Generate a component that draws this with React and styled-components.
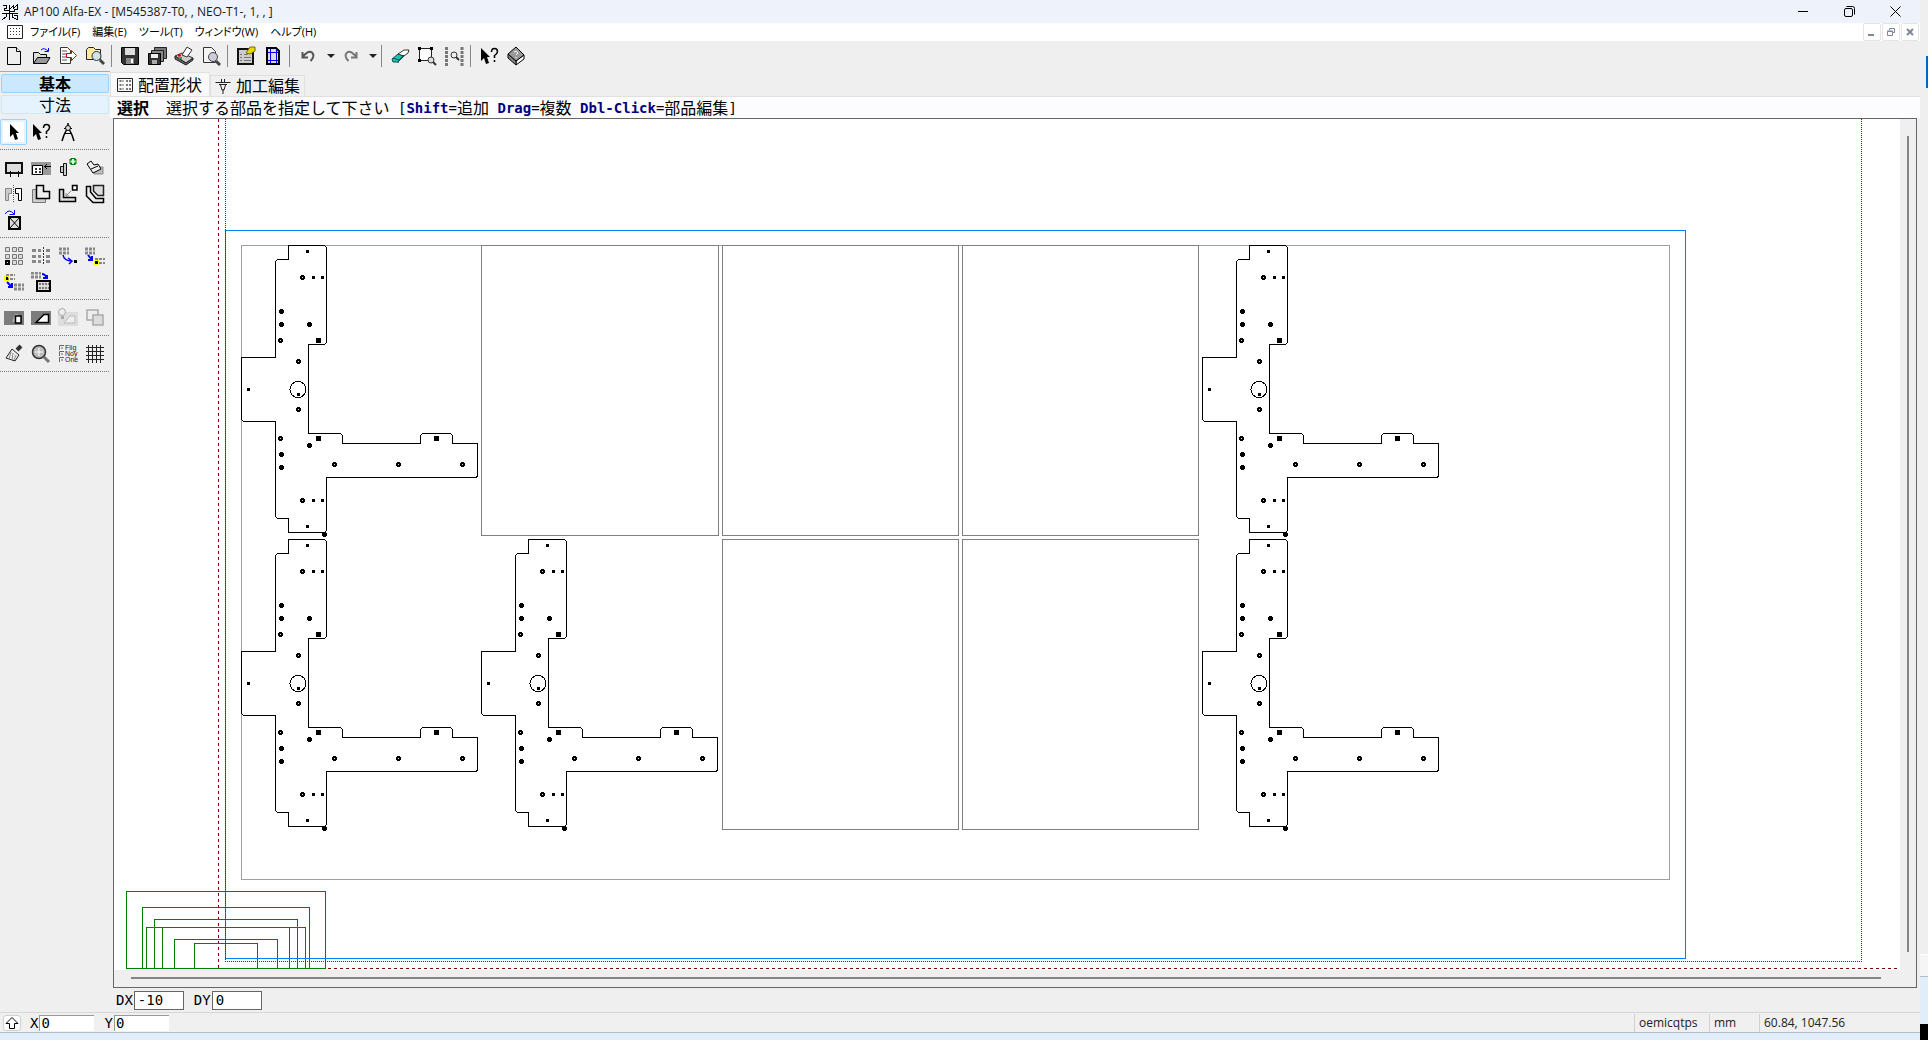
import React from 'react';
import styled, { createGlobalStyle, css } from 'styled-components';

const GlobalStyle = createGlobalStyle`
  * { box-sizing: border-box; }
  body {
    margin: 0;
    background: #e1edf8;
    color: #000;
    font-family: "Open Sans", "Noto Sans CJK JP", sans-serif;
    font-size: 12px;
  }
  button, input {
    font: inherit;
    color: inherit;
    margin: 0;
    padding: 0;
    border: 0;
    background: none;
    border-radius: 0;
  }
`

const Desktop = styled.div`
  display: flex;
  min-height: 100vh;
`
const Window = styled.div`
  flex: 1;
  min-width: 0;
  display: flex;
  flex-direction: column;
`
const Edge = styled.div`
  width: 8px;
  display: flex;
  flex-direction: column;
  align-items: flex-end;
  background: #efefef;
`
const EdgeMark = styled.div`
  width: 2px;
  height: 32px;
  margin-top: 56px;
  background: #0067c0;
`
const EdgePanel = styled.div`
  width: 8px;
  height: 23px;
  margin-top: auto;
  background: #f5f5f5;
  border-top: 1px solid #fff;
  border-bottom: 1px solid #b4bcc4;
`
const EdgeSky = styled.div`
  width: 8px;
  height: 47px;
  background: #e1edf8;
`
const EdgeDark = styled.div`
  width: 8px;
  height: 16px;
  background: #000;
`

const TitleBar = styled.header`
  display: flex;
  align-items: center;
  height: 23px;
  padding-left: 2px;
  background: #eef3fb;
`
const Title = styled.h1`
  flex: 1;
  margin: 0 0 0 5px;
  font-size: 12px;
  font-weight: 400;
  line-height: 16px;
  color: #1a1a1a;
  white-space: pre;
`
const WindowButton = styled.button`
  display: grid;
  place-items: center;
  width: 46px;
  height: 20px;
`
const WindowButtons = styled.div`
  display: flex;
  align-items: center;
  padding-right: 2px;
`

const MenuBar = styled.nav`
  display: flex;
  align-items: center;
  height: 18px;
  padding-left: 7px;
  background: #fff;
`
const MenuList = styled.div`
  flex: 1;
  display: flex;
  gap: 12px;
  margin-left: 7px;
`
const MenuItem = styled.button`
  font-size: 11px;
  line-height: 16px;
  white-space: nowrap;
  font-feature-settings: "palt";
`
const ChildButtons = styled.div`
  display: flex;
  gap: 1px;
  padding-right: 1px;
`
const ChildButton = styled.button`
  display: grid;
  place-items: center;
  width: 18px;
  height: 18px;
  border: 1px solid #e4e4e4;
  border-radius: 2px;
  background: #fff;
`

const ToolBar = styled.div`
  display: flex;
  align-items: center;
  height: 30px;
  background: #efefef;
`
const ToolButton = styled.button`
  display: grid;
  place-items: center;
  width: ${props => props.$narrow ? '15px' : '27px'};
  height: 26px;
`
const ToolLine = styled.div`
  width: 1px;
  height: 22px;
  margin: 0 4px 0 3px;
  background: #888;
`

const Body = styled.div`
  flex: 1;
  display: flex;
  background: #efefef;
`
const Side = styled.aside`
  width: 110px;
  padding: 2px 1px 0 0;
  border-top: 1px solid #a9a9a9;
  background: #efefef;
`
const SideTab = styled.button`
  display: block;
  width: 108px;
  height: 19px;
  margin: 0 0 2px 1px;
  border: 1px solid ${props => props.$active ? '#99d1ff' : '#cce8ff'};
  border-radius: 2px;
  background: ${props => props.$active ? '#cce8ff' : '#e5f3ff'};
  font-size: 16px;
  line-height: 16px;
  font-weight: ${props => props.$active ? 700 : 400};
`
const IconGroup = styled.div`
  display: grid;
  grid-template-columns: repeat(4, 27px);
  grid-auto-rows: 26px;
  padding: ${props => props.$first ? '3px' : '5px'} 0 4px;
  border-bottom: 1px dotted #777;
`
const SideButton = styled.button`
  display: grid;
  place-items: center;
  width: 27px;
  height: 26px;
  ${props => props.$active && css`
    border: 1px solid #99d1ff;
    border-radius: 2px;
    background: #fff;
    box-shadow: inset 0 0 0 2px #e5f3ff;
  `}
`

const Main = styled.main`
  flex: 1;
  min-width: 0;
  display: flex;
  flex-direction: column;
`
const Tabs = styled.div`
  display: flex;
  align-items: flex-end;
  height: 26px;
  border-bottom: 1px solid #e0e0e0;
`
const Tab = styled.button`
  display: flex;
  align-items: center;
  gap: 5px;
  height: ${props => props.$active ? '24px' : '21px'};
  padding: 0 ${props => props.$active ? '7px' : '4px'} 0 ${props => props.$active ? '6px' : '4px'};
  border: 1px solid #e0e0e0;
  border-bottom: 0;
  background: ${props => props.$active ? '#f9f9f9' : '#f0f0f0'};
  font-size: 16px;
  line-height: 18px;
  white-space: nowrap;
`
const Prompt = styled.div`
  display: flex;
  align-items: center;
  height: 21px;
  padding-left: 7px;
  background: #fcfcfe;
  font-size: 16px;
  line-height: 20px;
  white-space: pre;
`
const PromptMode = styled.b`
  margin-right: 17px;
`
const Mono = styled.span`
  font-family: "DejaVu Sans Mono", monospace;
  font-size: 14px;
`
const Key = styled(Mono)`
  font-weight: 700;
  color: #000080;
`
const View = styled.section`
  flex: 1;
  display: grid;
  grid-template-columns: 1fr 16px;
  grid-template-rows: 1fr 17px;
  margin: 0 3px 0 3px;
  border: 1px solid #666;
  background: #efefef;
`
const Sheet = styled.div`
  background: #fff;
  svg { display: block; width: 100%; height: auto; }
`
const VTrack = styled.div`
  padding: 17px 7px 18px;
`
const HTrack = styled.div`
  padding: 7px 19px 8px 17px;
`
const Thumb = styled.div`
  width: 100%;
  height: 100%;
  background: #858585;
`
const DeltaRow = styled.div`
  display: flex;
  align-items: center;
  height: 24px;
  padding-left: 6px;
`
const Label = styled.label`
  display: flex;
  align-items: center;
  gap: 1px;
  margin-right: 10px;
  font-family: "DejaVu Sans Mono", monospace;
  font-size: 14px;
`
const DeltaInput = styled.input`
  width: 50px;
  height: 19px;
  padding-left: 3px;
  border: 1px solid #666;
  background: #fff;
`

const Status = styled.footer`
  display: flex;
  align-items: center;
  height: 21px;
  padding-left: 3px;
  border-top: 1px solid #d7d7d7;
  border-bottom: 1px solid #b4bcc4;
  background: #f0f0f0;
`
const UpButton = styled.button`
  display: grid;
  place-items: center;
  width: 18px;
  height: 16px;
  margin-right: 9px;
  border: 1px solid #d0d0d0;
  border-radius: 3px;
  background: #fdfdfd;
`
const PointInput = styled.input`
  width: 55px;
  height: 16px;
  padding-left: 1px;
  border-top: 1px solid #999;
  border-left: 1px solid #999;
  background: #fff;
`
const StatusCells = styled.div`
  display: flex;
  margin-left: auto;
`
const StatusCell = styled.span`
  width: ${props => props.$width};
  height: 18px;
  padding-left: 4px;
  border-left: 1px solid #d0d0d0;
  line-height: 18px;
  color: #222;
`
const Taskbar = styled.div`
  height: 7px;
  background: #e1edf8;
`

// 20x20 pixel glyphs used by the tool bar and the side palette
const art = {
  new: <><path d="M3.500 1.500H12.500L16.500 5.500V18.500H3.500Z" fill="#eee" stroke="#000" /><path d="M12.500 1.500V5.500H16.500" fill="#fff" stroke="#000" /></>,
  open: <><path d="M2.500 17.500V6.500H7.500L9.500 8.500H15.500V11.500" fill="#ddd" stroke="#000" /><path d="M2.500 17.500L6.500 11.500H19L15.500 17.500Z" fill="#999" stroke="#000" /><path d="M10 4Q13 1 17 5M17.500 2V5.500H13.500" stroke="#00f" fill="none" /></>,
  export: <><path d="M2.500 1.500H9.500L12.500 4.500V17.500H2.500Z" fill="#fff" stroke="#333" /><path d="M4 5H9M4 8H9M4 11H9M4 14H9" stroke="#555" /><path d="M8.500 7.500H13.500V4.500L18.500 9.500L13.500 14.500V11.500H8.500Z" fill="#fff" stroke="#d00000" /></>,
  browse: <><path d="M1.500 13.500V3.500L3.500 1.500H8.500L10.500 3.500H15.500V13.500Z" fill="#ffe9a0" stroke="#222" /><circle cx="11.500" cy="10" r="4.500" fill="#cfe4e8" stroke="#333" /><path d="M15 14L19 18" stroke="#444" strokeWidth="3" /></>,
  save: <><path d="M1.500 1.500H18.500V18.500H3.500L1.500 16.500Z" fill="#333" stroke="#000" /><path d="M5 2H15V9H5Z" fill="#ddd" /><path d="M6 12H14V18H6Z" fill="#888" /><path d="M11 13H13V17H11Z" fill="#fff" /></>,
  saveAll: <><path d="M7.500 1.500H19.500V12.500H7.500Z" fill="#777" stroke="#222" /><path d="M4.500 4.500H16.500V15.500H4.500Z" fill="#888" stroke="#222" /><path d="M1.500 7.500H13.500V18.500H1.500Z" fill="#333" stroke="#000" /><path d="M4 8H11V12H4Z" fill="#eee" /><path d="M5 14H10V18H5Z" fill="#aaa" /></>,
  print: <><path d="M1 10L8 7L19 12L12 17Z" fill="#ccc" stroke="#333" /><path d="M8 9L13 1L18 4L13 11Z" fill="#fff" stroke="#333" /><path d="M1 10V13L12 19L19 14V12L12 17Z" fill="#666" stroke="#222" /><path d="M4 9.500H7" stroke="#e00000" strokeWidth="2" /><path d="M5 12H8" stroke="#00c040" strokeWidth="2" /></>,
  preview: <><path d="M2.500 1.500H10.500L14.500 5.500V16.500H2.500Z" fill="#f4f4f4" stroke="#333" /><circle cx="12" cy="11" r="4.500" fill="#ccd" stroke="#444" /><path d="M15 15L19 19" stroke="#444" strokeWidth="3" /></>,
  property: <><path d="M2 3H17V18H2Z" fill="#ccc" stroke="#111" strokeWidth="2" /><path d="M4 8.500H6M8 8.500H12M4 11.500H6M8 11.500H15M4 14.500H6M8 14.500H15" stroke="#777" /><path d="M10 7L14 1H19V5L14 8Z" fill="#e8d800" stroke="#776c00" /></>,
  doc: <><path d="M4 2H13L16 5V18H4Z" fill="#ddd" stroke="#000" strokeWidth="2" /><path d="M7.500 3V17M13.500 3V17M5 6.500H15M5 14.500H15" stroke="#00f" /></>,
  undo: <path d="M4.500 6V11.500H10M4 12Q10 3.500 14 6.500Q17.500 10 12.500 15" fill="none" stroke="#555" strokeWidth="2" />,
  redo: <path d="M16.500 6V11.500H11M17 12Q11 3.500 7 6.500Q3.500 10 8.500 15" fill="none" stroke="#777" strokeWidth="2" />,
  caret: <path d="M6 8H14L10 12Z" fill="#222" />,
  eraser: <><path d="M2 13L8 8L14 10L8 16L3 16Z" fill="#20c0b0" stroke="#055" /><path d="M8 8L14 4H19L18 7L14 10Z" fill="#fff" stroke="#333" /><path d="M3 12L9 14L14 9M9 14L8 17" fill="none" stroke="#055" /></>,
  zoomBox: <><path d="M2.500 2.500H14.500V14.500H2.500Z" fill="#fff" stroke="#222" /><path d="M1 1H4V4H1ZM13 1H16V4H13ZM1 13H4V16H1Z" fill="#000" /><circle cx="14" cy="14" r="3" fill="#ddd" stroke="#333" /><path d="M16 16L19 19" stroke="#333" strokeWidth="2" /></>,
  zoomParts: <><path d="M2.500 1V20M18 1V20" stroke="#777" strokeWidth="3" strokeDasharray="3 1" /><circle cx="10" cy="9" r="3" fill="none" stroke="#333" /><path d="M12 11L15 14" stroke="#333" strokeWidth="2" /></>,
  help: <><path d="M2 2V15L5 12L7 18L10 17L8 11H11Z" fill="#000" /><path d="M12.500 6Q12.500 2.500 15.500 2.500Q18.500 2.500 18.500 5.500Q18.500 7.500 15.500 9.500V12M15.500 14V16" fill="none" stroke="#000" strokeWidth="1.500" /></>,
  book: <><path d="M10 15L18 9V13L10 19Z" fill="#fff" stroke="#000" /><path d="M2 8L10 15V19L2 12Z" fill="#888" stroke="#000" /><path d="M2 8L10 1L18 9L10 15Z" fill="#999" stroke="#000" /><path d="M8 6Q11 4 12 7L10 9M10 11V12" fill="none" stroke="#fff" /></>,
  arrow: <path d="M6 2V15L9 12L11 18L14 17L12 11H15Z" fill="#000" />,
  compass: <><path d="M10 1V4M8.500 8L6 13L4 19M11.500 8L14 13L16 19" stroke="#000" strokeWidth="1.500" fill="none" /><circle cx="10" cy="6" r="2.500" fill="#ddd" stroke="#000" /><path d="M6 6.500H7.500M12.500 6.500H14M7 11.500H13" stroke="#000" /></>,
  sheet: <><path d="M2 5H18V15H2Z" fill="#ddd" stroke="#111" strokeWidth="2" /><path d="M6.500 13V19M14.500 13V19" stroke="#000" /></>,
  place: <><path d="M0 4H20V17H0Z" fill="#999" /><path d="M1.500 7.500H11.500V16.500H1.500Z" fill="#fff" stroke="#000" /><path d="M4 10H6V12H4ZM8 10H10V12H8ZM4 13H6V15H4ZM8 13H10V15H8Z" fill="#333" /><path d="M13 8.500H20M16 6L13.500 8.500L16 11" stroke="#000" fill="none" /></>,
  addPart: <><path d="M8.500 5.500H5.500V8.500H2.500V14.500H5.500V17.500H8.500Z" fill="#ccc" stroke="#111" /><path d="M5.500 8V15" stroke="#111" /><path d="M15 0V7M11.500 3.500H18.500" stroke="#080" strokeWidth="5" /><path d="M15 1V6M12.500 3.500H17.500" stroke="#dfd" strokeWidth="2" /></>,
  rotate: <><path d="M9 9H18V16H9Z" fill="#bbb" stroke="#888" /><path d="M2 6L6 3L9 7L13 6L16 11L8 15Z" fill="#eee" stroke="#000" /><path d="M6 11L13 8" stroke="#000" /></>,
  mirror: <><path d="M1.500 16.500V4.500H7.500V9.500H4.500V16.500Z" fill="#ccc" stroke="#888" /><path d="M9.500 1V19" stroke="#555" strokeDasharray="1 1" /><path d="M17.500 16.500V4.500H11.500V9.500H14.500V16.500Z" fill="#fff" stroke="#000" /></>,
  copy: <><path d="M1.500 5.500H11.500V11.500H14.500V18.500H1.500Z" fill="#ccc" stroke="#777" /><path d="M5.500 1.500H12.500V7.500H18.500V14.500H5.500Z" fill="#eee" stroke="#000" strokeWidth="1.500" /></>,
  move: <><path d="M1.500 5.500H5.500V13.500H17.500V17.500H1.500Z" fill="#ddd" stroke="#000" strokeWidth="1.500" /><path d="M14.500 1.500H19V6H14.500Z" fill="#fff" stroke="#000" strokeWidth="1.500" /><path d="M13 7L8 12M8 9V12H11" stroke="#888" fill="none" /></>,
  fit: <><path d="M1.500 2.500H5.500V8L11 14.500H18.500V18.500H8L1.500 12Z" fill="#eee" stroke="#000" strokeWidth="1.500" /><path d="M8.500 1.500H18.500V11.500H13L8.500 7Z" fill="#ddd" stroke="#222" strokeWidth="1.500" /></>,
  remove: <><path d="M1 4Q5 -2 10 4M5.500 4.500H10.500V0" stroke="#00f" fill="none" /><path d="M5 7H16V19H5Z" fill="#ddd" stroke="#000" strokeWidth="2" /><path d="M6 8L15 18M15 8L6 18" stroke="#000" /></>,
  grid9: <><path d="M1.500 1.500H5.500V5.500H1.500ZM8.500 1.500H12.500V5.500H8.500ZM14.500 1.500H18.500V5.500H14.500ZM1.500 8.500H5.500V12.500H1.500ZM8.500 8.500H12.500V12.500H8.500ZM14.500 8.500H18.500V12.500H14.500ZM8.500 14.500H12.500V18.500H8.500ZM14.500 14.500H18.500V18.500H14.500Z" fill="#ddd" stroke="#777" /><path d="M2 15H5V18H2Z" fill="#fff" stroke="#000" strokeWidth="2" /></>,
  grid6: <><path d="M1 3H5V6H1ZM7 3H10V6H7ZM1 9H5V12H1ZM7 9H10V12H7ZM1 14H5V17H1ZM7 14H10V17H7ZM15 3H19V6H15ZM15 9H19V12H15ZM15 14H19V17H15Z" fill="#888" /><path d="M12.500 1V19" stroke="#333" strokeDasharray="2 1" /></>,
  arrayTo: <><path d="M1 3H11M1 7H11" stroke="#888" strokeWidth="3" strokeDasharray="3 1" /><path d="M5 9Q6 15 14 15M10 12L14 15L11 18" stroke="#00f" strokeWidth="1.500" fill="none" /><path d="M16 14H19V17H16Z" fill="#000" /></>,
  arrayPick: <><path d="M0 3H10M0 7H10" stroke="#888" strokeWidth="3" strokeDasharray="3 1" /><path d="M3 9L7 14M7 10V14H3" stroke="#00f" strokeWidth="2" fill="none" /><path d="M9 14H14V19H9Z" fill="#ff0" /><path d="M10 13H20M10 17H20" stroke="#888" strokeWidth="2" strokeDasharray="3 1" /><path d="M10 15H13V18H10Z" fill="#000" /></>,
  arraySrc: <><path d="M0 4H5V9H0Z" fill="#ff0" /><path d="M2 3H11M2 7H11" stroke="#888" strokeWidth="2" strokeDasharray="3 1" /><path d="M2 5H4V8H2Z" fill="#000" /><path d="M3 10L8 15M8 11V15H4" stroke="#00f" strokeWidth="2" fill="none" /><path d="M10 13H20M10 17H20" stroke="#888" strokeWidth="3" strokeDasharray="3 1" /></>,
  arraySheet: <><path d="M0 1H10M0 5H10" stroke="#888" strokeWidth="3" strokeDasharray="3 1" /><path d="M11 2Q14 2 16 6M12 6H16V3" stroke="#00f" strokeWidth="2" fill="none" /><path d="M6 9H19V19H6Z" fill="#ddd" stroke="#000" strokeWidth="2" /><path d="M8 12H18M8 16H18" stroke="#777" strokeWidth="2" strokeDasharray="2 1" /></>,
  shapeBox: <><path d="M0 3H20V17H0Z" fill="#7c7c7c" /><path d="M8 14L11 6H14V14Z" fill="#aaa" /><path d="M11.500 8H17V15H11.500Z" fill="#fff" stroke="#000" strokeWidth="1.500" /></>,
  shapeCut: <><path d="M0 3H20V17H0Z" fill="#7c7c7c" /><path d="M5 14.500L13 6.500H17.500V14.500Z" fill="#fff" stroke="#000" strokeWidth="1.500" /></>,
  lamp: <><path d="M0 4H20V18H0Z" fill="#ddd" /><path d="M6 15L12 8H17V15Z" fill="#eee" stroke="#bbb" /><circle cx="4" cy="4" r="3.500" fill="#eee" stroke="#aaa" /><path d="M3 8H6V11H3Z" fill="#aaa" /></>,
  layers: <><path d="M2 2H13V12H2Z" fill="#eee" stroke="#aaa" strokeWidth="1.500" /><path d="M8 7H18V17H8Z" fill="#ddd" stroke="#aaa" strokeWidth="1.500" /></>,
  broom: <><path d="M13 6L17 2" stroke="#333" strokeWidth="4" /><path d="M8 5L15 11L11 17L2 14Z" fill="#eee" stroke="#222" /><path d="M7 8L5 15M9 9L8 16M12 11L10 16" stroke="#888" /></>,
  lens: <><circle cx="8" cy="8" r="6.500" fill="#bbb" stroke="#333" strokeWidth="1.500" /><path d="M8 4V12M4 8H12" stroke="#fff" /><path d="M13 13L18 18" stroke="#777" strokeWidth="3" /></>,
  grid: <path d="M3.500 1V19M7.500 1V19M11.500 1V19M15.500 1V19M1 3.500H19M1 7.500H19M1 11.500H19M1 15.500H19" stroke="#222" />,
}

const Glyph = ({ name }) => (
  <svg width="20" height="20" viewBox="0 0 20 20" fill="none" aria-hidden="true">{art[name]}</svg>
);

// three tick boxes with short captions
const ListGlyph = () => (
  <svg width="20" height="20" viewBox="0 0 20 20" aria-hidden="true">
    <path d="M1.500 6V1.500H6M1.500 12V7.500H6M1.500 18V13.500H6M3 4H5M3 10H5M3 16H5" fill="none" stroke="#666" />
    <g fontFamily="Liberation Sans" fontSize="7" fill="#222">
      <text x="7" y="6">Flig</text>
      <text x="7" y="12">Noy</text>
      <text x="7" y="18">One</text>
    </g>
  </svg>
);

const AppLogo = () => (
  <svg width="17" height="16" viewBox="0 0 17 16" fill="none" stroke="#000" shapeRendering="crispEdges" aria-hidden="true">
    <path d="M.500 1.500H4.500V4.500H2.500V6.500H7.500V1M7.500 5.500L11.500 1.500V4.500L15.500 .500V5.500H12.500V7.500H7.500V15.500M0 9.500H16M4.500 9.500V12.500L.500 15.500M10.500 10V13.500L15.500 15.500V11.500H12" />
  </svg>
);

const SheetIcon = () => (
  <svg width="16" height="14" viewBox="0 0 16 14" fill="none" aria-hidden="true">
    <path d="M.500 .500H15.500V13.500H.500Z" stroke="#222" />
    <path d="M3 3.500H14M3 6.500H14M3 9.500H14" stroke="#333" strokeDasharray="1 2" />
  </svg>
);

const LayoutIcon = () => (
  <svg width="16" height="14" viewBox="0 0 16 14" fill="none" aria-hidden="true">
    <path d="M.500 .500H15.500V13.500H.500Z" stroke="#222" />
    <path d="M2.500 3H6.500M2.500 7H6.500M2.500 11H6.500M9 3H14M9 7H14M9 11H14" stroke="#777" strokeWidth="2" strokeDasharray="2 1" />
  </svg>
);

const PunchIcon = () => (
  <svg width="16" height="16" viewBox="0 0 16 16" fill="none" stroke="#222" aria-hidden="true">
    <path d="M6.500 1V4M9.500 1V4M.500 4.500H15.500M4 6.500H12M5.500 7L7 12H9L10.500 7M8 11V16" />
  </svg>
);

const outline = 'M47.500 .500H83.500l2 2V97.500l-2 2H67.500V188.500H99.500l2 2V198.500H179.500V190.500l2-2H209.500l2 2V198.500H236.500V230.500l-1 2H85.500V285.500l-2 2H47.500V273.500H36.500l-2-2V176.500H2.500l-2-2V112.500H34.500V16.500l2-2H47.500Z'
const rings = [[61, 32], [39, 95], [57, 116], [57, 164], [39, 193], [93, 219], [157, 219], [221, 219], [61, 255]]
const dots = [[40, 66], [40, 79], [68, 79], [68, 200], [40, 209], [40, 222], [83, 289]]
const specks = [[66, 6], [72, 32], [81, 32], [7, 144], [57, 149], [72, 255], [81, 255], [66, 281]]
const squares = [[77, 95], [77, 193], [195, 193]]

const Part = ({ x, y }) => (
  <g transform={`translate(${x} ${y})`} fill="#000" stroke="none">
    <path d={outline} fill="none" stroke="#000" />
    <circle cx="57" cy="144.500" r="8" fill="none" stroke="#000" />
    {rings.map(([cx, cy]) => (
      <g key={`${cx}-${cy}`}>
        <circle cx={cx + .5} cy={cy + .5} r="2.500" />
        <rect x={cx} y={cy} width="1" height="1" fill="#ddd" />
      </g>
    ))}
    {dots.map(([cx, cy]) => <circle key={`${cx}-${cy}`} cx={cx + .5} cy={cy + .5} r="2.500" />)}
    {specks.map(([cx, cy]) => <rect key={`${cx}-${cy}`} x={cx - 1} y={cy - 1} width="3" height="3" />)}
    {squares.map(([cx, cy]) => <rect key={`${cx}-${cy}`} x={cx - 2} y={cy - 2} width="5" height="5" />)}
  </g>
);

const parts = [[241, 245], [1202, 245], [241, 539], [481, 539], [1202, 539]]
const blanks = [[481, 245, 237], [722, 245, 236], [962, 245, 236], [722, 539, 236], [962, 539, 236]]
const clamps = [[126, 891, 199], [142, 907, 167], [154, 919, 143], [146, 927, 159], [162, 927, 127], [174, 939, 103], [194, 943, 63]]

const Drawing = () => (
  <svg viewBox="114 119 1786 851" shapeRendering="crispEdges" fill="none" role="img" aria-label="sheet layout">
    <path d="M218.500 119V968M226 968.500H1900" stroke="#800000" strokeDasharray="3 3" />
    <rect x="241.500" y="245.500" width="1428" height="634" stroke="#a0a0a0" />
    {blanks.map(([x, y, w]) => (
      <rect key={`${x}-${y}`} x={x + .5} y={y + .5} width={w} height="290" stroke="#808080" />
    ))}
    {parts.map(([x, y]) => <Part key={`${x}-${y}`} x={x} y={y} />)}
    {clamps.map(([x, y, w]) => (
      <rect key={`${x}-${y}`} x={x + .5} y={y + .5} width={w} height={968 - y} stroke="#008000" />
    ))}
    <rect x="225.500" y="230.500" width="1460" height="728" stroke="#0080ff" />
    <path d="M225.500 119V961.500H1861.500V119" stroke="#800080" strokeDasharray="1 1" />
  </svg>
);

const menus = ['ファイル(F)', '編集(E)', 'ツール(T)', 'ウィンドウ(W)', 'ヘルプ(H)']
const tools = [
  'new', 'open', 'export', 'browse', '|', 'save', 'saveAll', 'print', 'preview', '|', 'property', 'doc', '|',
  'undo', 'caret', 'redo', 'caret', '|', 'eraser', 'zoomBox', 'zoomParts', '|', 'help', 'book',
]
const palette = [
  ['arrow', 'help', 'compass'],
  ['sheet', 'place', 'addPart', 'rotate', 'mirror', 'copy', 'move', 'fit', 'remove'],
  ['grid9', 'grid6', 'arrayTo', 'arrayPick', 'arraySrc', 'arraySheet'],
  ['shapeBox', 'shapeCut', 'lamp', 'layers'],
  ['broom', 'lens', 'list', 'grid'],
]

const TopBars = () => (
  <>
    <TitleBar>
      <AppLogo />
      <Title>AP100 Alfa-EX - [M545387-T0, , NEO-T1-, 1, , ]</Title>
      <WindowButtons>
        <WindowButton aria-label="minimize">
          <svg width="11" height="11"><path d="M0 5.500H10" stroke="#000" /></svg>
        </WindowButton>
        <WindowButton aria-label="restore">
          <svg width="11" height="11" fill="none" stroke="#000"><rect x=".5" y="2.500" width="8" height="8" rx="1.500" /><path d="M2.500 .500H8.500Q10.500 .500 10.500 2.500V8.500" /></svg>
        </WindowButton>
        <WindowButton aria-label="close">
          <svg width="11" height="11"><path d="M.500 .500L10.500 10.500M10.500 .500L.500 10.500" stroke="#000" /></svg>
        </WindowButton>
      </WindowButtons>
    </TitleBar>
    <MenuBar>
      <SheetIcon />
      <MenuList>
        {menus.map(menu => <MenuItem key={menu}>{menu}</MenuItem>)}
      </MenuList>
      <ChildButtons>
        <ChildButton aria-label="minimize sheet">
          <svg width="10" height="10"><path d="M1 8H7" stroke="#7a8899" strokeWidth="2" /></svg>
        </ChildButton>
        <ChildButton aria-label="restore sheet">
          <svg width="10" height="10" fill="none" stroke="#7a8899"><path d="M1.500 4.500H6.500V8.500H1.500ZM1 4H7M3.500 3V1.500H8.500V5.500H7" /></svg>
        </ChildButton>
        <ChildButton aria-label="close sheet">
          <svg width="10" height="10"><path d="M2 2L8 8M8 2L2 8" stroke="#7a8899" strokeWidth="2" /></svg>
        </ChildButton>
      </ChildButtons>
    </MenuBar>
    <ToolBar>
      {tools.map((name, i) => name === '|'
        ? <ToolLine key={i} />
        : <ToolButton key={i} $narrow={name === 'caret'} aria-label={name}><Glyph name={name} /></ToolButton>)}
    </ToolBar>
  </>
);

const SidePalette = () => (
  <Side>
    <SideTab $active>基本</SideTab>
    <SideTab>寸法</SideTab>
    {palette.map((group, i) => (
      <IconGroup key={i} $first={i === 0}>
        {group.map(name => (
          <SideButton key={name} $active={name === 'arrow'} aria-label={name}>
            {name === 'list' ? <ListGlyph /> : <Glyph name={name} />}
          </SideButton>
        ))}
      </IconGroup>
    ))}
  </Side>
);

export default function App() {
  return (
    <Desktop>
      <GlobalStyle />
      <Window>
        <TopBars />
        <Body>
          <SidePalette />
          <Main>
            <Tabs>
              <Tab $active><LayoutIcon />配置形状</Tab>
              <Tab><PunchIcon />加工編集</Tab>
            </Tabs>
            <Prompt>
              <PromptMode>選択</PromptMode>
              選択する部品を指定して下さい
              <Mono> [</Mono><Key>Shift</Key><Mono>=</Mono>追加
              <Mono> </Mono><Key>Drag</Key><Mono>=</Mono>複数
              <Mono> </Mono><Key>Dbl-Click</Key><Mono>=</Mono>部品編集<Mono>]</Mono>
            </Prompt>
            <View>
              <Sheet><Drawing /></Sheet>
              <VTrack><Thumb /></VTrack>
              <HTrack><Thumb /></HTrack>
            </View>
            <DeltaRow>
              <Label>DX<DeltaInput defaultValue="-10" /></Label>
              <Label>DY<DeltaInput defaultValue="0" /></Label>
            </DeltaRow>
          </Main>
        </Body>
        <Status>
          <UpButton aria-label="up">
            <svg width="14" height="12" fill="#fff" stroke="#000"><path d="M7 .500L13 6.500H9.500V11.500H4.500V6.500H1Z" /></svg>
          </UpButton>
          <Label>X<PointInput defaultValue="0" /></Label>
          <Label>Y<PointInput defaultValue="0" /></Label>
          <StatusCells>
            <StatusCell $width="75px">oemicqtps</StatusCell>
            <StatusCell $width="50px">mm</StatusCell>
            <StatusCell $width="161px">60.84, 1047.56</StatusCell>
          </StatusCells>
        </Status>
        <Taskbar />
      </Window>
      <Edge>
        <EdgeMark />
        <EdgePanel />
        <EdgeSky />
        <EdgeDark />
      </Edge>
    </Desktop>
  );
}
